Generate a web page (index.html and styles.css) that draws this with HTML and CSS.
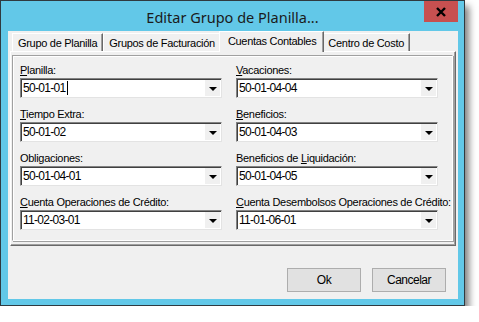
FILE: index.html
```html
<!DOCTYPE html>
<html>
<head>
<meta charset="UTF-8">
<title>Editar Grupo de Planilla</title>
<link rel="stylesheet" href="styles.css">
</head>
<body>
<div class="window">
  <div class="titlebar">
    <span></span>
    <span class="title">Editar Grupo de Planilla...</span>
    <div class="close">
      <svg width="12" height="10" viewBox="0 0 12 10"><path d="M2 1 L10 9 M10 1 L2 9" stroke="#000" stroke-width="2.4" fill="none"/></svg>
    </div>
  </div>
  <div class="client">
    <div class="tabs">
      <div class="tab">Grupo de Planilla</div>
      <div class="tab">Grupos de Facturación</div>
      <div class="tab active">Cuentas Contables</div>
      <div class="tab">Centro de Costo</div>
    </div>
    <div class="tabpanel">
      <div class="box">
        <div class="field">
          <div class="label"><u>P</u>lanilla:</div>
          <div class="combo"><span class="value">50-01-01<span class="caret"></span></span><span class="drop"></span></div>
        </div>
        <div class="field">
          <div class="label"><u>V</u>acaciones:</div>
          <div class="combo"><span class="value">50-01-04-04</span><span class="drop"></span></div>
        </div>
        <div class="field">
          <div class="label"><u>T</u>iempo Extra:</div>
          <div class="combo"><span class="value">50-01-02</span><span class="drop"></span></div>
        </div>
        <div class="field">
          <div class="label"><u>B</u>eneficios:</div>
          <div class="combo"><span class="value">50-01-04-03</span><span class="drop"></span></div>
        </div>
        <div class="field">
          <div class="label">Obligaciones:</div>
          <div class="combo"><span class="value">50-01-04-01</span><span class="drop"></span></div>
        </div>
        <div class="field">
          <div class="label">Beneficios de <u>L</u>iquidación:</div>
          <div class="combo"><span class="value">50-01-04-05</span><span class="drop"></span></div>
        </div>
        <div class="field">
          <div class="label"><u>C</u>uenta Operaciones de Crédito:</div>
          <div class="combo"><span class="value">11-02-03-01</span><span class="drop"></span></div>
        </div>
        <div class="field">
          <div class="label"><u>C</u>uenta Desembolsos Operaciones de Crédito:</div>
          <div class="combo"><span class="value">11-01-06-01</span><span class="drop"></span></div>
        </div>
      </div>
    </div>
    <div class="buttons">
      <div class="button">Ok</div>
      <div class="button">Cancelar</div>
    </div>
  </div>
</div>
</body>
</html>
```

FILE: styles.css
```css
body {
    margin: 0;
    background: #ffffff;
    font-family: "Liberation Sans", Arial, sans-serif;
    color: #000000;
}

.window {
    box-sizing: border-box;
    width: 465px;
    height: 306px;
    background: #62c8e8;
    border: 1px solid #2f3a40;
    box-shadow: 4px 6px 7px rgba(0, 0, 0, 0.5);
    display: flex;
    flex-direction: column;
}

.titlebar {
    height: 30px;
    display: grid;
    grid-template-columns: 1fr auto 1fr;
}

.title {
    align-self: center;
    font-family: "Noto Sans", sans-serif;
    font-size: 14.5px;
    color: #1b1b1b;
    padding-top: 1px;
}

.close {
    justify-self: end;
    width: 34px;
    height: 21px;
    margin-right: 6px;
    background: #c75050;
    display: flex;
    align-items: center;
    justify-content: center;
}

.client {
    margin: 0 6px 6px 7px;
    height: 268px;
    background: #f0f0f0;
    padding: 0 2px;
    display: flex;
    flex-direction: column;
    font-size: 11px;
    letter-spacing: -0.3px;
}

.tabs {
    display: flex;
    height: 18px;
    margin-top: 2px;
    padding-left: 2px;
}

.tab {
    box-sizing: border-box;
    height: 18px;
    padding: 3px 5px 0 5px;
    border-top: 1px solid #ffffff;
    border-left: 1px solid #ffffff;
    border-right: 1px solid #696969;
    box-shadow: inset -1px 0 #a0a0a0;
    white-space: nowrap;
}

.tab.active {
    position: relative;
    z-index: 1;
    height: 21px;
    margin: -2px -2px -1px -2px;
    padding: 3px 7px 0 8px;
    background: #f0f0f0;
}

.tabpanel {
    height: 195px;
    box-sizing: border-box;
    border-top: 1px solid #ffffff;
    border-left: 1px solid #ffffff;
    border-right: 1px solid #696969;
    border-bottom: 1px solid #696969;
    box-shadow: inset -1px -1px #a0a0a0;
    padding: 3px 2px 4px 1px;
}

.box {
    box-sizing: border-box;
    height: 100%;
    border: 1px solid;
    border-color: #a0a0a0 #ffffff #ffffff #a0a0a0;
    box-shadow: 1px 1px #a0a0a0, inset 1px 1px #ffffff;
    padding: 7px 14px 0 7px;
    display: grid;
    grid-template-columns: 202px 202px;
    column-gap: 14px;
    row-gap: 9px;
    align-content: start;
}

.label {
    height: 14px;
    line-height: 14px;
    margin-bottom: 1px;
    white-space: nowrap;
}

.combo {
    box-sizing: border-box;
    height: 20px;
    background: #ffffff;
    border: 1px solid;
    border-color: #828282 #e3e3e3 #e3e3e3 #828282;
    box-shadow: inset 1px 1px #404040;
    display: flex;
    align-items: stretch;
}

.value {
    flex: 1;
    padding-left: 2px;
    font-size: 12px;
    letter-spacing: -0.7px;
    line-height: 19px;
    display: flex;
    align-items: center;
}

.caret {
    width: 1px;
    height: 14px;
    margin-left: 2px;
    background: #000000;
}

.drop {
    width: 15px;
    margin: 1px 1px 1px 0;
    background: #f0f0f0;
    position: relative;
}

.drop::after {
    content: "";
    position: absolute;
    left: 4px;
    top: 7px;
    border-left: 4px solid transparent;
    border-right: 4px solid transparent;
    border-top: 4px solid #000000;
}

.buttons {
    display: flex;
    justify-content: flex-end;
    gap: 11px;
    margin-top: 22px;
    padding-right: 10px;
}

.button {
    box-sizing: border-box;
    width: 74px;
    height: 24px;
    background: #e1e1e1;
    border: 1px solid #adadad;
    display: flex;
    align-items: center;
    justify-content: center;
    font-size: 12px;
    letter-spacing: -0.5px;
}
```
